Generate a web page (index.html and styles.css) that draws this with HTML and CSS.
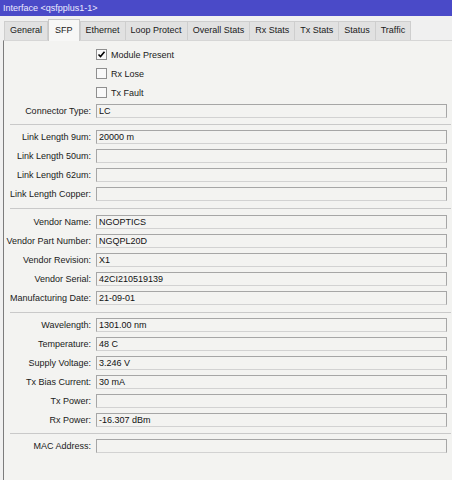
FILE: index.html
```html
<!DOCTYPE html>
<html>
<head>
<meta charset="utf-8">
<link rel="stylesheet" href="styles.css">
</head>
<body>
<div class="window">
  <div class="titlebar">Interface &lt;qsfpplus1-1&gt;</div>
  <div class="tabs">
    <div class="tab">General</div>
    <div class="tab active">SFP</div>
    <div class="tab">Ethernet</div>
    <div class="tab">Loop Protect</div>
    <div class="tab">Overall Stats</div>
    <div class="tab">Rx Stats</div>
    <div class="tab">Tx Stats</div>
    <div class="tab">Status</div>
    <div class="tab">Traffic</div>
  </div>
  <div class="panel">
    <div class="form">
      <div class="check-row first"><span class="cb"><svg width="9" height="9" viewBox="0 0 9 9"><path d="M1.5 4.5 L3.5 6.5 L7.5 1.8" fill="none" stroke="#000" stroke-width="1.6"/></svg></span><span>Module Present</span></div>
      <div class="check-row"><span class="cb"></span><span>Rx Lose</span></div>
      <div class="check-row"><span class="cb"></span><span>Tx Fault</span></div>

      <div class="field top"><span class="lbl">Connector Type:</span><div class="box">LC</div></div>
      <div class="sep"></div>
      <div class="field"><span class="lbl">Link Length 9um:</span><div class="box">20000 m</div></div>
      <div class="field"><span class="lbl">Link Length 50um:</span><div class="box"></div></div>
      <div class="field"><span class="lbl">Link Length 62um:</span><div class="box"></div></div>
      <div class="field"><span class="lbl">Link Length Copper:</span><div class="box"></div></div>
      <div class="sep wide"></div>
      <div class="field after-wide"><span class="lbl">Vendor Name:</span><div class="box">NGOPTICS</div></div>
      <div class="field"><span class="lbl">Vendor Part Number:</span><div class="box">NGQPL20D</div></div>
      <div class="field"><span class="lbl">Vendor Revision:</span><div class="box">X1</div></div>
      <div class="field"><span class="lbl">Vendor Serial:</span><div class="box">42CI210519139</div></div>
      <div class="field"><span class="lbl">Manufacturing Date:</span><div class="box">21-09-01</div></div>
      <div class="sep wide"></div>
      <div class="field"><span class="lbl">Wavelength:</span><div class="box">1301.00 nm</div></div>
      <div class="field"><span class="lbl">Temperature:</span><div class="box">48 C</div></div>
      <div class="field"><span class="lbl">Supply Voltage:</span><div class="box">3.246 V</div></div>
      <div class="field"><span class="lbl">Tx Bias Current:</span><div class="box">30 mA</div></div>
      <div class="field"><span class="lbl">Tx Power:</span><div class="box"></div></div>
      <div class="field"><span class="lbl">Rx Power:</span><div class="box">-16.307 dBm</div></div>
      <div class="sep"></div>
      <div class="field"><span class="lbl">MAC Address:</span><div class="box"></div></div>
    </div>
  </div>
</div>
</body>
</html>
```
FILE: styles.css
```css
* { box-sizing: border-box; }
html, body { margin: 0; padding: 0; }
body {
  width: 452px;
  height: 480px;
  overflow: hidden;
  background: #f0f0f0;
  font-family: "Liberation Sans", Arial, sans-serif;
  font-size: 9px;
  color: #1a1a1a;
}
.window {
  display: flex;
  flex-direction: column;
  height: 480px;
}
.titlebar {
  height: 16px;
  line-height: 16px;
  background: #4a4ac8;
  color: #ecebff;
  padding-left: 3px;
}
.tabs {
  display: flex;
  align-items: flex-start;
  height: 21px;
  margin-top: 3px;
  padding-left: 4px;
}
.tab {
  height: 19px;
  margin-top: 2px;
  line-height: 17px;
  padding: 0 5px;
  background: #e1e1e1;
  border: 1px solid #cecece;
  border-bottom: none;
  color: #1a1a1a;
}
.tab + .tab { border-left: none; }
.tab.active {
  height: 22px;
  margin-top: 0;
  line-height: 20px;
  background: #f7f7f6;
  border: 1px solid #c8c8c8;
  border-bottom: none;
  position: relative;
  z-index: 1;
  padding: 0 6px;
}
.tab.active + .tab { border-left: 1px solid #cecece; }
.panel {
  flex: 1;
  margin-left: 3px;
  border-left: 1px solid #7c7c7c;
  border-top: 1px solid #d6d6d6;
  background: #f3f3f1;
}
.form {
  display: flex;
  flex-direction: column;
  padding-top: 8px;
}
.check-row {
  display: flex;
  align-items: center;
  height: 11px;
  margin-top: 8px;
  padding-left: 92px;
}
.check-row.first { margin-top: 0; }
.cb {
  width: 11px;
  height: 11px;
  border: 1px solid #8f8f8f;
  background: #f9f9f9;
  margin-right: 4px;
  display: flex;
  align-items: center;
  justify-content: center;
}
.cb svg { display: block; }
.field {
  display: grid;
  grid-template-columns: 87px 351px;
  column-gap: 5px;
  align-items: center;
  height: 14px;
  margin-top: 5px;
}
.field.top { margin-top: 6px; }
.field.after-wide { margin-top: 6px; }
.lbl {
  text-align: right;
  white-space: nowrap;
}
.box {
  height: 14px;
  line-height: 12px;
  border: 1px solid #a6a6a6;
  border-bottom-color: #d2d2d2;
  padding-left: 2px;
  color: #111;
  white-space: nowrap;
}
.sep {
  height: 1px;
  background: #c9c9c9;
  margin: 6px 1px 0 6px;
}
.sep.wide { margin-top: 7px; }
```
